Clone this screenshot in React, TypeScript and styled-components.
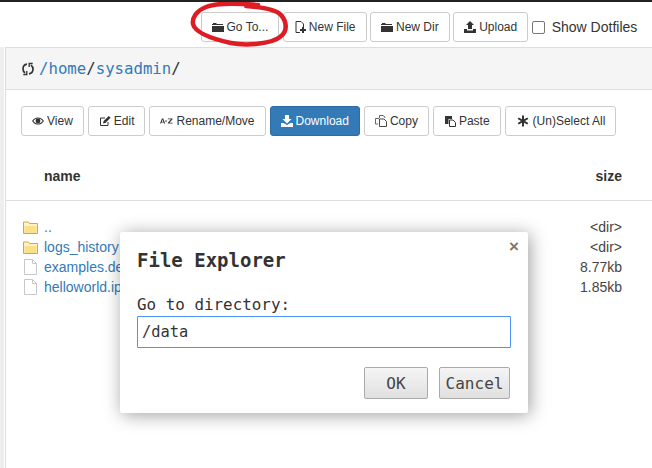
import React, { ReactElement, ReactNode } from "react";
import styled, { createGlobalStyle } from "styled-components";

const SANS = `"Liberation Sans", Arial, sans-serif`;
const MONO = `"DejaVu Sans Mono", monospace`;

const GlobalStyle = createGlobalStyle`
  html, body { margin: 0; padding: 0; background: #fff; }
  body { width: 652px; height: 468px; overflow: hidden; font-family: ${SANS}; color: #333; }
`;

const Page = styled.div`
  position: relative;
  width: 652px;
  height: 468px;
  overflow: hidden;
  border-top: 2px solid #222;
  box-sizing: border-box;
`;

const TopBar = styled.div`
  display: flex;
  align-items: flex-start;
  height: 45px;
  padding: 10px 0 0 200.5px;
  box-sizing: border-box;
  gap: 3.5px;
`;

const Btn = styled.button<{ $primary?: boolean }>`
  display: inline-flex;
  align-items: center;
  justify-content: center;
  gap: 3px;
  height: 30px;
  padding: 0 10px;
  box-sizing: border-box;
  font: 12px ${SANS};
  white-space: nowrap;
  border-radius: 3px;
  color: ${(p) => (p.$primary ? "#fff" : "#333")};
  background: ${(p) => (p.$primary ? "#337ab7" : "#fff")};
  border: 1px solid ${(p) => (p.$primary ? "#2e6da4" : "#ccc")};
  svg { flex: none; }
`;

const DotLabel = styled.label`
  display: flex;
  align-items: center;
  gap: 7px;
  height: 30px;
  font-size: 14px;
  white-space: nowrap;
`;

const CheckBox = styled.span`
  display: block;
  width: 11px;
  height: 11px;
  border: 1px solid #767676;
  border-radius: 2px;
  background: #fff;
`;

const Shell = styled.div`
  background: #eee;
  padding-left: 4px;
  height: 421px;
`;

const Inner = styled.div`
  background: #fff;
  padding-left: 1px;
  height: 100%;
`;

const Panel = styled.section`
  height: 100%;
  background: #fff;
  border-left: 1px solid #ddd;
  border-top: 1px solid #ddd;
`;

const PanelHead = styled.header`
  display: flex;
  align-items: center;
  gap: 4px;
  height: 42px;
  padding-left: 15px;
  background: #f5f5f5;
  border-bottom: 1px solid #ddd;
  font: 15.7px ${MONO};
  box-sizing: border-box;
`;

const Crumb = styled.span`
  color: #337ab7;
`;

const Actions = styled.div`
  display: flex;
  gap: 4px;
  padding: 16px 0 0 15px;
`;

const HeadRow = styled.div`
  display: flex;
  justify-content: space-between;
  align-items: center;
  height: 65px;
  box-sizing: border-box;
  padding: 16px 30px 0 38px;
  border-bottom: 1px solid #ddd;
  font-size: 14px;
  font-weight: 700;
`;

const Rows = styled.div`
  padding-top: 16px;
`;

const Row = styled.div`
  display: flex;
  align-items: center;
  height: 20px;
  padding: 0 30px 0 17px;
  font-size: 14px;
`;

const Name = styled.a`
  flex: 1;
  margin-left: 6px;
  color: #337ab7;
`;

const Size = styled.span`
  color: #444;
`;

const Dialog = styled.div`
  position: absolute;
  left: 120px;
  top: 230px;
  width: 408px;
  height: 181px;
  box-sizing: border-box;
  padding: 16px 17px;
  background: #fff;
  border-radius: 2px;
  box-shadow: 2px 2px 18px rgba(0, 0, 0, 0.38);
  font-family: ${MONO};
  color: #333;
`;

const Close = styled.span`
  position: absolute;
  right: 9px;
  top: 5px;
  font: 700 17px ${SANS};
  color: #777;
`;

const DialogTitle = styled.h2`
  margin: 0;
  font: 700 19px/24px ${MONO};
`;

const DialogLabel = styled.div`
  margin-top: 23px;
  font-size: 15.9px;
  line-height: 19px;
`;

const PathInput = styled.div`
  height: 32px;
  width: 374px;
  box-sizing: border-box;
  padding: 0 4px;
  margin-top: 2px;
  display: flex;
  align-items: center;
  border: 1px solid #4d90fe;
  border-radius: 1px;
  font-size: 15.4px;
`;

const DialogFoot = styled.div`
  display: flex;
  justify-content: flex-end;
  gap: 11px;
  margin: 19px 1px 0 0;
`;

const DialogBtn = styled.button<{ $w: number }>`
  width: ${(p) => p.$w}px;
  height: 32px;
  padding: 0;
  font: 16px ${MONO};
  color: #444;
  background: linear-gradient(#f5f5f5, #e0e0e0);
  border: 1px solid #aaa;
  border-radius: 2px;
`;

const Scribble = styled.svg`
  position: absolute;
  left: 186px;
  top: -2px;
  pointer-events: none;
`;

const Icon = ({ children }: { children: ReactNode }): ReactElement => (
  <svg width="12" height="12" viewBox="0 0 12 12" fill="#333">{children}</svg>
);

const FolderIcon = () => (
  <Icon><path d="M0 3h1V2h3l1 1h6v1H0zM0 5h12v6H0z" /></Icon>
);
const NewFileIcon = () => (
  <Icon>
    <path d="M2 .5h5l2.500 2.500v3M2 .5v11h4" fill="none" stroke="#333" />
    <path d="M8 6h2v2h2v2h-2v2H8v-2H6V8h2z" />
  </Icon>
);
const UploadIcon = () => (
  <Icon><path d="M6 0l4 4H8v4H4V4H2zM0 8h3v1.500h6V8h3v4H0z" /></Icon>
);
const DownloadIcon = () => (
  <Icon><path d="M4 0h4v4h2.500L6 8.500 1.500 4H4zM0 8h2.500L6 10l3.500-2H12v4H0z" fill="#fff" /></Icon>
);
const EyeIcon = () => (
  <Icon>
    <path d="M0 6c2-3 4-3.600 6-3.600S10 3 12 6c-2 3-4 3.600-6 3.600S2 9 0 6zm1.300 0C3 8 4.500 8.600 6 8.600S9 8 10.700 6C9 4 7.500 3.400 6 3.400S3 4 1.300 6z" />
    <circle cx="6" cy="6" r="2.400" />
  </Icon>
);
const EditIcon = () => (
  <Icon>
    <path d="M9 7v3.500H1.500V3H6" fill="none" stroke="#333" />
    <path d="M4 8.500l.6-2.400L9.800 1l1.800 1.800-5.200 5.100z" />
  </Icon>
);
const CopyIcon = () => (
  <Icon>
    <path d="M4.500 3V.5H8L10 2v1M.5 3.500h3.500M.5 3.500V9H3" fill="none" stroke="#555" strokeWidth=".9" />
    <path d="M4.500 4h4.500l2.500 2.500v5h-7z" fill="none" stroke="#333" strokeWidth=".9" />
  </Icon>
);
const PasteIcon = () => (
  <Icon>
    <path d="M1 1h7v3H4.500v5H1z" />
    <path d="M5.500 5H9l2.500 2.500v4h-6z" fill="none" stroke="#333" />
  </Icon>
);
const AsteriskIcon = () => (
  <svg width="14" height="12" viewBox="-1 0 14 12" fill="#333">
    <path d="M5 .5h2v3.800l3.300-1.900 1 1.700L8 6l3.300 1.900-1 1.700L7 7.700v3.800H5V7.700L1.700 9.600l-1-1.700L4 6 .7 4.100l1-1.700L5 4.300z" />
  </svg>
);
const SortIcon = () => (
  <svg width="13" height="12" viewBox="0 0 15 12" fill="#333">
    <path d="M2.300 3h1.400l2.300 6H4.700l-.4-1.200H1.700L1.300 9H0zm.7 1.400L2.100 6.900h1.800zM6 5.500h2v1H6zM9 3h5.500v1l-3.600 4h3.700v1H9V8l3.600-4H9z" />
  </svg>
);
const RefreshIcon = () => (
  <svg width="14" height="14" viewBox="0 0 14 14" fill="none" stroke="#333" strokeWidth="1.700">
    <path d="M6 2.200C3.500 2.500 2 4.500 2 7c0 1.700.8 3 2 3.900" />
    <path d="M8 11.800c2.500-.3 4-2.300 4-4.800 0-1.700-.8-3-2-3.900" />
    <path d="M2.300 12.500h3.500V9M11.700 1.500H8.200V5" strokeWidth="1.300" />
  </svg>
);
const YellowFolder = () => (
  <svg width="15" height="13" viewBox="0 0 15 13">
    <path d="M.5 12.500V1h5l1 1.500h8v10z" fill="#fff3c4" stroke="#dba14a" />
    <path d="M1.500 5h12v7h-12z" fill="#fbe08a" />
  </svg>
);
const PlainFile = () => (
  <svg width="15" height="16" viewBox="0 0 15 16" fill="#fff" stroke="#c8c8c8">
    <path d="M1.500.5h8l4 4v11h-12z" />
    <path d="M9.500.5v4h4" fill="none" />
  </svg>
);

export default function App(): ReactElement {
  const rows = [
    { name: "..", size: "<dir>", dir: true },
    { name: "logs_history", size: "<dir>", dir: true },
    { name: "examples.desktop", size: "8.77kb", dir: false },
    { name: "helloworld.ipynb", size: "1.85kb", dir: false },
  ];

  return (
    <Page>
      <GlobalStyle />
      <TopBar>
        <Btn><FolderIcon />Go To...</Btn>
        <Btn><NewFileIcon />New File</Btn>
        <Btn><FolderIcon />New Dir</Btn>
        <Btn><UploadIcon />Upload</Btn>
        <DotLabel><CheckBox />Show Dotfiles</DotLabel>
      </TopBar>
      <Shell>
        <Inner>
          <Panel>
            <PanelHead>
              <RefreshIcon />
              <span><Crumb>/home</Crumb>/<Crumb>sysadmin</Crumb>/</span>
            </PanelHead>
            <Actions>
              <Btn><EyeIcon />View</Btn>
              <Btn><EditIcon />Edit</Btn>
              <Btn><SortIcon />Rename/Move</Btn>
              <Btn $primary><DownloadIcon />Download</Btn>
              <Btn><CopyIcon />Copy</Btn>
              <Btn><PasteIcon />Paste</Btn>
              <Btn><AsteriskIcon />(Un)Select All</Btn>
            </Actions>
            <HeadRow><span>name</span><span>size</span></HeadRow>
            <Rows>
              {rows.map((r) => (
                <Row key={r.name}>
                  {r.dir ? <YellowFolder /> : <PlainFile />}
                  <Name>{r.name}</Name>
                  <Size>{r.size}</Size>
                </Row>
              ))}
            </Rows>
          </Panel>
        </Inner>
      </Shell>

      <Dialog>
        <Close>×</Close>
        <DialogTitle>File Explorer</DialogTitle>
        <DialogLabel>Go to directory:</DialogLabel>
        <PathInput>/data</PathInput>
        <DialogFoot>
          <DialogBtn $w={64}>OK</DialogBtn>
          <DialogBtn $w={71}>Cancel</DialogBtn>
        </DialogFoot>
      </Dialog>

      <Scribble width="110" height="52" viewBox="0 0 110 52" fill="none">
        <path
          d="M72 5C50 3 30 3 20 7 10 11 6 18 7 24c2 8 15 14 38 19 15 3 40 1 49-6 8-6 7-15 1-22C90 9 75 7 60 6"
          stroke="#dd1c24"
          strokeWidth="4.500"
          strokeLinecap="round"
        />
      </Scribble>
    </Page>
  );
}
